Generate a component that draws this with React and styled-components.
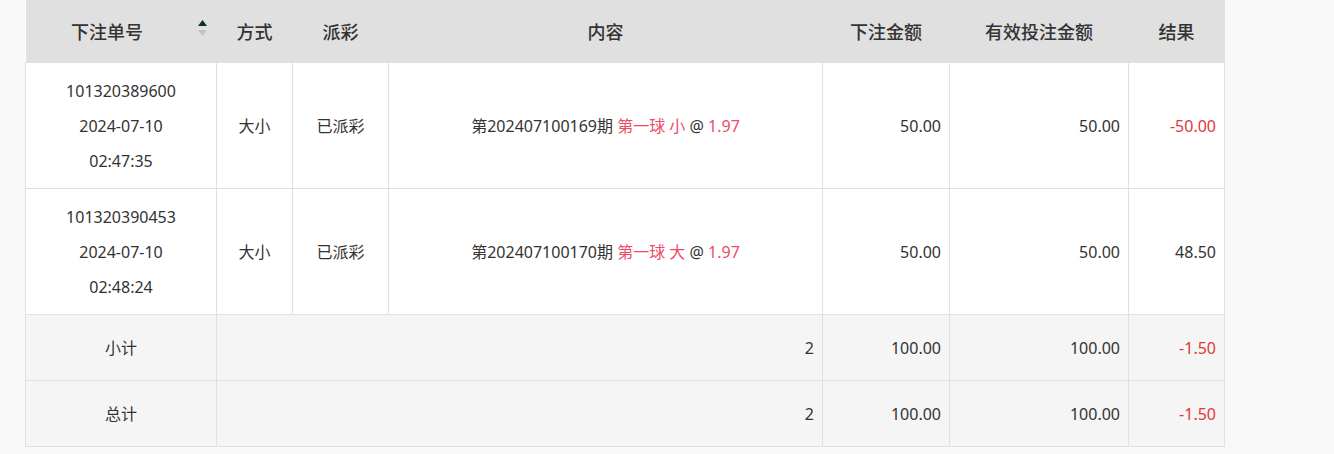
import React from 'react'
import styled, { createGlobalStyle } from 'styled-components'

const GlobalStyle = createGlobalStyle`
  html, body {
    margin: 0;
    padding: 0;
    background: #f8f8f8;
    font-family: "Noto Sans", "Noto Sans CJK SC", sans-serif;
    color: #333;
  }
`

const Page = styled.div`
  padding: 0 0 0 25px;
`

const Table = styled.table`
  width: 1200px;
  table-layout: fixed;
  border-collapse: collapse;
  background: #fff;
  font-size: 16px;
`

const HeadCell = styled.th`
  position: relative;
  height: 62px;
  padding: 0 ${p => (p.$sortable ? '28px' : '0')} 0 0;
  background: #e0e0e0;
  font-size: 18px;
  font-weight: 500;
  color: #333;
  text-align: center;
`

const SortIcon = styled.span`
  position: absolute;
  right: 10px;
  top: 20px;
  display: flex;
  flex-direction: column;
  gap: 4px;
`

const Cell = styled.td`
  border: 1px solid #e0e0e0;
  padding: 11px 8px 9px;
  text-align: ${p => p.$align || 'center'};
  line-height: 35px;
  color: ${p => (p.$loss ? '#e3373b' : '#333')};
  background: ${p => (p.$foot ? '#f5f5f5' : '#fff')};
  height: ${p => (p.$foot ? '45px' : '105px')};
  box-sizing: content-box;
`

const Red = styled.span`
  color: #ee4c66;
`

const cols = [191, 76, 96, 434, 127, 179, 96]

const rows = [
  { id: '101320389600', date: '2024-07-10', time: '02:47:35', no: '202407100169', pick: '小', amount: '50.00', valid: '50.00', result: '-50.00' },
  { id: '101320390453', date: '2024-07-10', time: '02:48:24', no: '202407100170', pick: '大', amount: '50.00', valid: '50.00', result: '48.50' },
]

const totals = ['小计', '总计']

const Arrows = () => (
  <SortIcon>
    <svg width="9" height="6" viewBox="0 0 9 6"><path d="M4.5 0 L9 6 L0 6 Z" fill="#0f2e2a" /></svg>
    <svg width="9" height="6" viewBox="0 0 9 6"><path d="M0 0 L9 0 L4.5 6 Z" fill="#c2c2c2" /></svg>
  </SortIcon>
)

export default function App() {
  return (
    <Page>
      <GlobalStyle />
      <Table>
        <colgroup>
          {cols.map((w, i) => <col key={i} style={{ width: w }} />)}
        </colgroup>
        <thead>
          <tr>
            <HeadCell $sortable>下注单号<Arrows /></HeadCell>
            <HeadCell>方式</HeadCell>
            <HeadCell>派彩</HeadCell>
            <HeadCell>内容</HeadCell>
            <HeadCell>下注金额</HeadCell>
            <HeadCell>有效投注金额</HeadCell>
            <HeadCell>结果</HeadCell>
          </tr>
        </thead>
        <tbody>
          {rows.map(r => (
            <tr key={r.id}>
              <Cell>{r.id}<br />{r.date}<br />{r.time}</Cell>
              <Cell>大小</Cell>
              <Cell>已派彩</Cell>
              <Cell>第{r.no}期 <Red>第一球 {r.pick}</Red> @ <Red>1.97</Red></Cell>
              <Cell $align="right">{r.amount}</Cell>
              <Cell $align="right">{r.valid}</Cell>
              <Cell $align="right" $loss={r.result.startsWith('-')}>{r.result}</Cell>
            </tr>
          ))}
          {totals.map(t => (
            <tr key={t}>
              <Cell $foot>{t}</Cell>
              <Cell $foot colSpan={3} $align="right">2</Cell>
              <Cell $foot $align="right">100.00</Cell>
              <Cell $foot $align="right">100.00</Cell>
              <Cell $foot $align="right" $loss>-1.50</Cell>
            </tr>
          ))}
        </tbody>
      </Table>
    </Page>
  )
}
